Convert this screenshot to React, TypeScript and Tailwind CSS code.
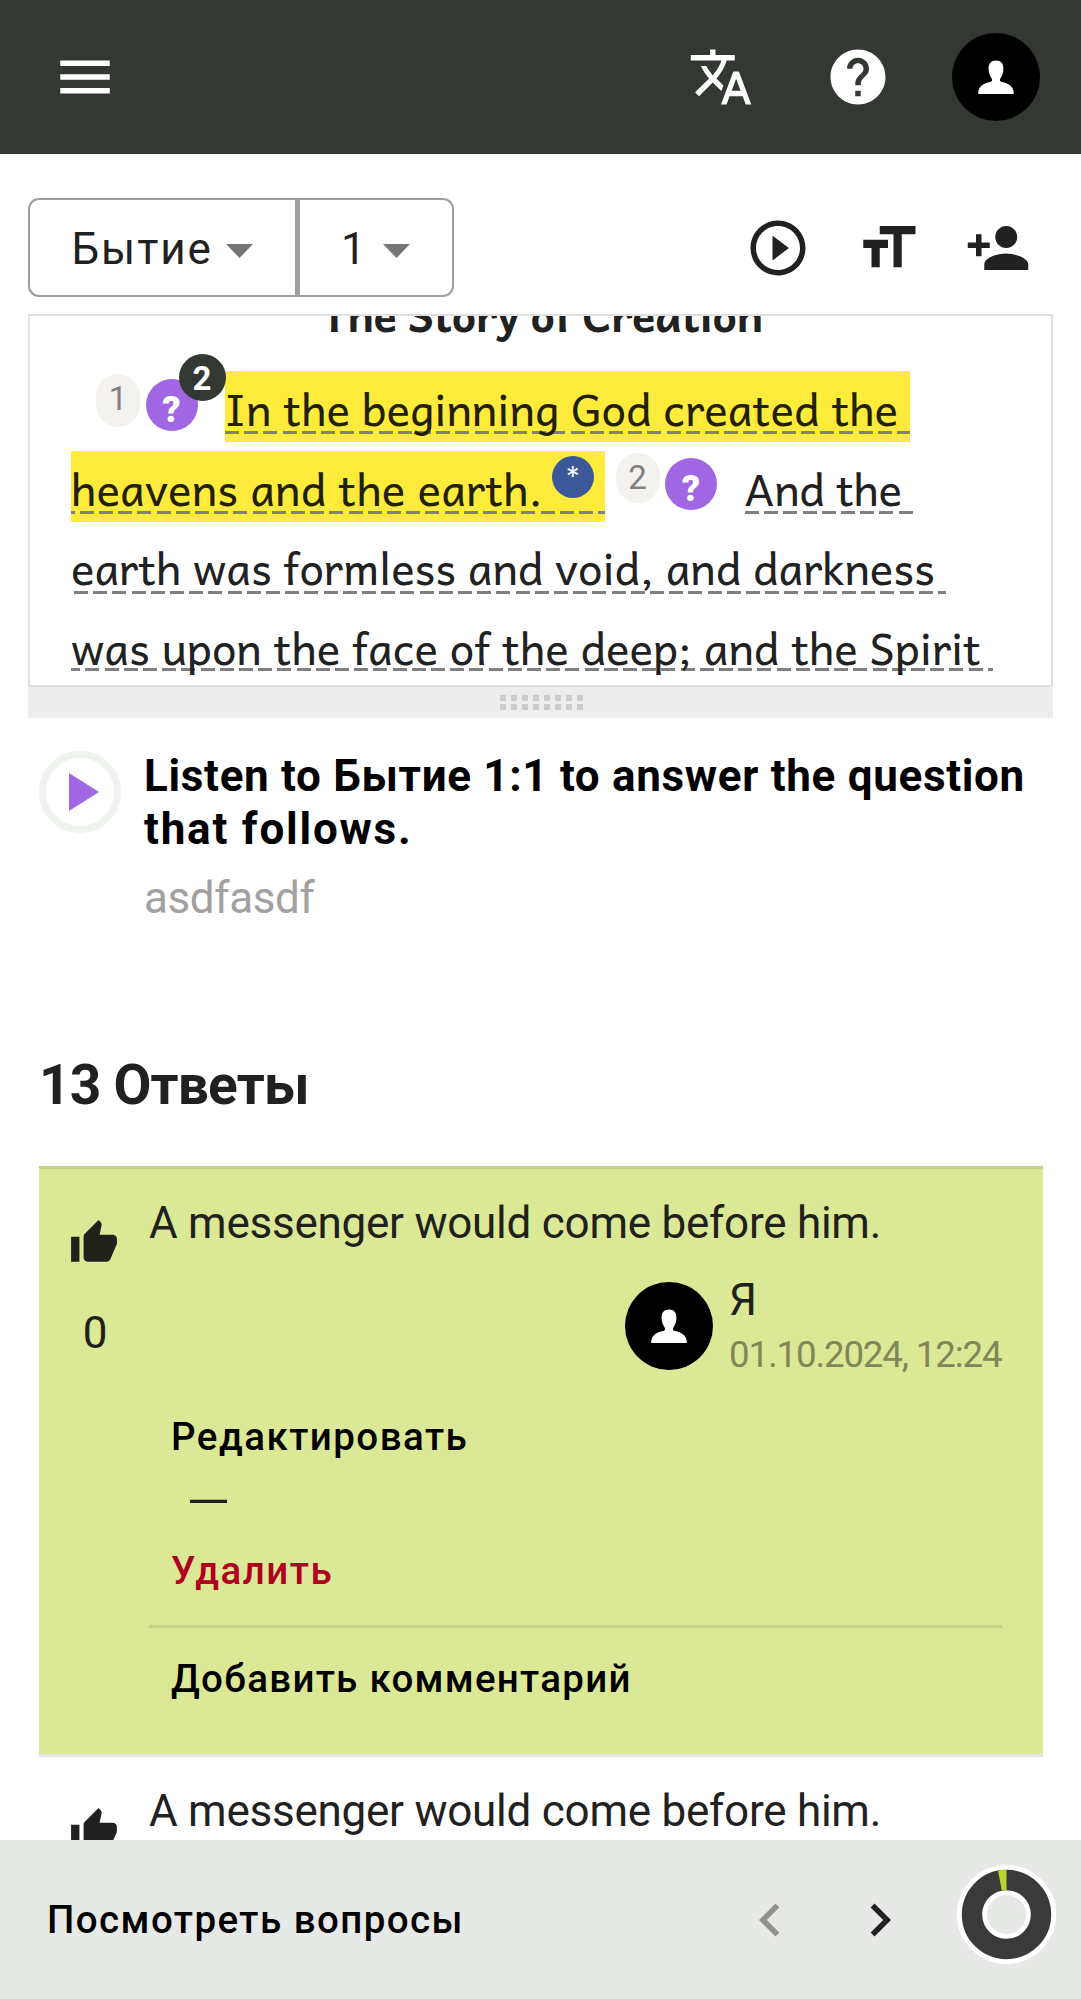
import React from "react";

function Icon({ d, size = 66, className = "" }: { d: string; size?: number; className?: string }) {
  return (
    <svg width={size} height={size} viewBox="0 0 24 24" fill="currentColor" className={`block shrink-0 ${className}`}>
      <path d={d} />
    </svg>
  );
}

const MENU = "M3 18h18v-2H3v2zm0-5h18v-2H3v2zm0-7v2h18V6H3z";
const TRANSLATE =
  "M12.87 15.07l-2.54-2.51.03-.03c1.74-1.94 2.98-4.17 3.71-6.53H17V4h-7V2H8v2H1v1.99h11.17C11.5 7.92 10.44 9.75 9 11.35 8.07 10.32 7.3 9.19 6.69 8h-2c.73 1.63 1.73 3.17 2.98 4.56l-5.09 5.02L4 19l5-5 3.11 3.11.76-2.04zM18.5 10h-2L12 22h2l1.12-3h4.75L21 22h2l-4.5-12zm-2.62 7l1.62-4.33L19.12 17h-3.24z";
const HELP =
  "M12 2C6.48 2 2 6.48 2 12s4.48 10 10 10 10-4.48 10-10S17.52 2 12 2zm1 17h-2v-2h2v2zm2.07-7.75l-.9.92C13.45 12.9 13 13.5 13 15h-2v-.5c0-1.1.45-2.1 1.17-2.83l1.24-1.26c.37-.36.59-.86.59-1.41 0-1.1-.9-2-2-2s-2 .9-2 2H8c0-2.21 1.79-4 4-4s4 1.79 4 4c0 .88-.36 1.68-.93 2.25z";
const PLAY_CIRCLE =
  "M10 16.5l6-4.5-6-4.5v9zM12 2C6.48 2 2 6.48 2 12s4.48 10 10 10 10-4.48 10-10S17.52 2 12 2zm0 18c-4.41 0-8-3.59-8-8s3.59-8 8-8 8 3.59 8 8-3.59 8-8 8z";
const TEXT_SIZE = "M9 4v3h5v12h3V7h5V4H9zm-6 8h3v7h3v-7h3V9H3v3z";
const PERSON_ADD =
  "M15 12c2.21 0 4-1.79 4-4s-1.79-4-4-4-4 1.79-4 4 1.79 4 4 4zm-9-2V7H4v3H1v2h3v3h2v-3h3v-2H6zm9 4c-2.67 0-8 1.34-8 4v2h16v-2c0-2.66-5.33-4-8-4z";
const THUMB =
  "M1 21h4V9H1v12zm22-11c0-1.1-.9-2-2-2h-6.31l.95-4.57.03-.32c0-.41-.17-.79-.44-1.06L14.17 1 7.59 7.59C7.22 7.95 7 8.45 7 9v10c0 1.1.9 2 2 2h9c.83 0 1.54-.5 1.84-1.22l3.02-7.05c.09-.23.14-.47.14-.73v-2z";
const LEFT = "M15.41 7.41L14 6l-6 6 6 6 1.41-1.41L10.83 12z";
const RIGHT = "M10 6L8.59 7.41 13.17 12l-4.58 4.59L10 18l6-6z";

function Avatar({ className = "" }: { className?: string }) {
  return (
    <svg width="88" height="88" viewBox="0 0 88 88" className={`block shrink-0 ${className}`}>
      <circle cx="44" cy="44" r="44" fill="#000" />
      <path
        d="M44 27.500c5 0 7.400 3 7.400 8.200c0 4.300-1.500 7.500-3.300 10.300c-.5 1.900.2 2.700 1.700 3.100c6.600 1.500 12 3.700 12 11.900H26.200c0-8.200 5.400-10.400 12-11.900c1.500-.4 2.200-1.200 1.700-3.100c-1.800-2.800-3.300-6-3.300-10.300c0-5.200 2.400-8.200 7.400-8.200z"
        fill="#fff"
      />
    </svg>
  );
}

function Caret() {
  return (
    <svg width="27" height="14" viewBox="0 0 27 14" className="mt-[6px] block shrink-0">
      <path d="M0 0h27L13.5 14z" fill="#757575" />
    </svg>
  );
}

function Question({ className = "" }: { className?: string }) {
  return (
    <span className={`flex h-[52px] w-[52px] shrink-0 items-center justify-center rounded-full bg-[#a066e3] ${className}`}>
      <span className="pt-[9px] font-['Roboto'] text-[36px] leading-[42px] font-black text-white">?</span>
    </span>
  );
}

function Answer({ votes, children, className }: { votes?: number; children?: React.ReactNode; className: string }) {
  return (
    <article className={`flex w-[1004px] border-t-[3px] ${className}`}>
      <div className="flex w-[110px] shrink-0 flex-col items-center pt-[49px]">
        <Icon d={THUMB} size={50} />
        {votes !== undefined && <span className="mt-[39px] pl-[2px] text-[44px] leading-[53px]">{votes}</span>}
      </div>
      <div className="flex w-[853px] flex-col pt-7">
        <p className="text-[44px] leading-[53px] tracking-[-0.250px] whitespace-nowrap">A messenger would come before him.</p>
        {children}
      </div>
    </article>
  );
}

export default function App() {
  return (
    <div className="flex h-[1999px] w-[1081px] flex-col overflow-hidden bg-white font-['Roboto',sans-serif] text-[#212121]">
      <header className="flex h-[154px] shrink-0 items-center bg-[#343832] pr-[41.500px] pl-[52px] text-white">
        <Icon d={MENU} />
        <Icon d={TRANSLATE} className="ml-auto" />
        <Icon d={HELP} className="ml-[71.500px]" />
        <Avatar className="ml-[60.500px]" />
      </header>

      <div className="mt-[44px] flex h-[99px] shrink-0 items-center pr-[50px] pl-[28px]">
        <div className="flex h-[99px] w-[269px] items-center rounded-l-[11px] border-2 border-[#9e9e9e] pl-[41.500px]">
          <span className="w-[154.500px] pt-[3px] text-[44px] leading-[53px] tracking-[1.887px]">Бытие</span>
          <Caret />
        </div>
        <div className="flex h-[99px] w-[157px] items-center rounded-r-[11px] border-2 border-l-[3px] border-[#9e9e9e] pl-[41px]">
          <span className="w-[42px] pt-[3px] text-[44px] leading-[53px]">1</span>
          <Caret />
        </div>
        <Icon d={PLAY_CIRCLE} className="ml-auto" />
        <Icon d={TEXT_SIZE} className="ml-[44px]" />
        <Icon d={PERSON_ADD} className="ml-[44px]" />
      </div>

      <section className="mt-[17px] ml-[28px] h-[373px] w-[1025px] shrink-0 overflow-hidden border-2 border-[#e0e0e0] font-['Andika','Inter',sans-serif] text-[44px]">
        <h2 className="-mt-[42px] ml-[291px] h-[86px] leading-[80px] font-bold tracking-[-0.750px] whitespace-nowrap">The Story of Creation</h2>
        <div className="flex h-[80px] items-start pl-[66px] whitespace-nowrap">
          <span className="mt-[14px] flex h-[53px] w-[44px] items-center justify-center rounded-[22px] bg-[#f3f2ef] pb-[4px] font-['Roboto'] text-[33px] text-[#808080]">1</span>
          <span className="relative mt-[19px] ml-[5.500px]">
            <Question />
            <span className="absolute -top-[25px] left-[33px] flex h-[47px] w-[47px] items-center justify-center rounded-full bg-[#343832] pt-[3px] font-['Roboto'] text-[33px] font-bold text-white">2</span>
          </span>
          <span className="mt-[11px] ml-[27.500px] h-[71px] w-[685px] bg-[#ffeb3b] bg-[repeating-linear-gradient(90deg,#808080_0_14px,transparent_14px_19.2px)] bg-[length:100%_3px] bg-[position:0_60px] bg-no-repeat leading-[73px] text-[#212008]">
            In the beginning God created the
          </span>
        </div>
        <div className="flex h-[80px] items-start pl-[41px] whitespace-nowrap">
          <span className="relative mt-[11px] h-[71px] w-[534px] bg-[#ffeb3b] bg-[repeating-linear-gradient(90deg,#808080_-10.4px_3.6px,transparent_3.6px_8.8px)] bg-[length:100%_3px] bg-[position:0_60px] bg-no-repeat leading-[73px] tracking-[0.150px] text-[#212008]">
            heavens and the earth.
            <span className="absolute top-[5px] left-[481px] flex h-[42px] w-[42px] justify-center rounded-full bg-[#3b5998] pt-[2px] text-[30px] leading-[38px] text-white">*</span>
          </span>
          <span className="mt-[13px] ml-[11px] flex h-[50px] w-[44px] items-center justify-center rounded-[22px] bg-[#f3f2ef] pr-px font-['Roboto'] text-[33px] text-[#808080]">2</span>
          <Question className="mt-[18px] ml-[5px]" />
          <span className="mt-[11px] ml-[27.500px] h-[71px] w-[168px] bg-[repeating-linear-gradient(90deg,#808080_0_14px,transparent_14px_19.2px)] bg-[length:100%_3px] bg-[position:0_60px] bg-no-repeat leading-[73px] tracking-[-0.333px]">
            And the
          </span>
        </div>
        <div className="flex h-[80px] items-start pl-[41px] whitespace-nowrap">
          <span className="mt-[11px] h-[71px] w-[875px] bg-[repeating-linear-gradient(90deg,#808080_3px_17px,transparent_17px_22.2px)] bg-[length:100%_3px] bg-[position:0_60px] bg-no-repeat leading-[71px] tracking-[-0.055px]">
            earth was formless and void, and darkness
          </span>
        </div>
        <div className="flex h-[80px] items-start pl-[41px] whitespace-nowrap">
          <span className="mt-[11px] h-[71px] w-[922px] bg-[repeating-linear-gradient(90deg,#808080_-4.8px_9.2px,transparent_9.2px_14.4px)] bg-[length:100%_3px] bg-[position:0_57px] bg-no-repeat leading-[71px] tracking-[-0.040px]">
            was upon the face of the deep; and the Spirit
          </span>
        </div>
      </section>
      <div className="ml-[28px] flex h-[31px] w-[1025px] shrink-0 items-start justify-center bg-[#ededed] pt-[8px] pl-[2px]">
        <div className="grid grid-cols-8 gap-x-[5px] gap-y-[3px]">
          {Array.from({ length: 16 }, (_, i) => (
            <i key={i} className="h-[6px] w-[6px] bg-[#cccccc]" />
          ))}
        </div>
      </div>

      <section className="mt-[32px] flex h-[174px] shrink-0 pl-[39px]">
        <div className="mt-px flex h-[82px] w-[82px] shrink-0 items-center justify-center rounded-full border-[7px] border-[#eef3ee]">
          <svg width="30" height="38" viewBox="0 0 30 38" className="ml-[8px] block">
            <path d="M0 0v38l30-19z" fill="#a066e3" />
          </svg>
        </div>
        <div className="ml-[23px] whitespace-nowrap">
          <h1 className="text-[44px] leading-[53px] font-bold text-black">
            <span className="block tracking-[0.680px]">Listen to Бытие 1:1 to answer the question</span>
            <span className="block tracking-[1.790px]">that follows.</span>
          </h1>
          <p className="mt-[16px] text-[44px] leading-[53px] tracking-[-0.387px] text-[#a1a1a1]">asdfasdf</p>
        </div>
      </section>

      <h2 className="mt-[128px] h-[66px] shrink-0 pl-[39px] text-[55px] leading-[66px] font-bold tracking-[-0.788px]">13 Ответы</h2>

      <div className="mt-[48px] ml-[39px] flex h-[674px] shrink-0 flex-col overflow-hidden">
        <Answer votes={0} className="h-[589px] shrink-0 border-[#c5d088] bg-[#dbe896] text-[#20211a]">
          <div className="mt-[23px] flex pl-[476px]">
            <Avatar className="mt-[9px]" />
            <div className="ml-[16px] pt-px whitespace-nowrap">
              <div className="text-[44px] leading-[53px]">Я</div>
              <div className="mt-[6px] text-[36.67px] leading-[44px] tracking-[-1.133px] text-[#808658]">01.10.2024, 12:24</div>
            </div>
          </div>
          <div className="mt-[36px] flex flex-col pl-[22px] text-[38.5px] leading-[48px] font-medium whitespace-nowrap text-black">
            <span className="tracking-[1.471px]">Редактировать</span>
            <span className="mt-[15px] ml-[15px] w-fit origin-left scale-x-[1.29] text-[44px] leading-[53px] font-normal text-[#20211a]">—</span>
            <span className="mt-[18px] tracking-[1.500px] text-[#b00020]">Удалить</span>
          </div>
          <hr className="mt-[30px] h-[3px] border-0 bg-[#c5d088]" />
          <span className="mt-[27px] pl-[22px] text-[38.5px] leading-[48px] font-medium tracking-[1.290px] whitespace-nowrap text-black">Добавить комментарий</span>
        </Answer>
        <Answer className="-mt-px border-[#e4e4e4]" />
      </div>

      <footer className="flex h-[159px] shrink-0 items-center bg-[#e7e9e6] pr-[25px] pl-[47px]">
        <span className="text-[38.5px] leading-[48px] font-medium tracking-[1.450px] whitespace-nowrap text-black">Посмотреть вопросы</span>
        <Icon d={LEFT} className="ml-auto text-[#90918f]" />
        <Icon d={RIGHT} className="ml-[44px]" />
        <svg width="99" height="99" viewBox="0 0 99 99" className="mb-[11px] ml-[44px] block">
          <circle cx="49.500" cy="49.500" r="34.500" fill="none" stroke="#fff" strokeWidth="30" />
          <circle cx="49.500" cy="49.500" r="34.500" fill="none" stroke="#3a3a3a" strokeWidth="20.400" />
          <path d="M49.500 4.800V25.200A24.300 24.300 0 0 0 44.900 25.600L41 5.700A44.700 44.700 0 0 1 49.500 4.800z" fill="#b9d532" />
        </svg>
      </footer>
    </div>
  );
}
